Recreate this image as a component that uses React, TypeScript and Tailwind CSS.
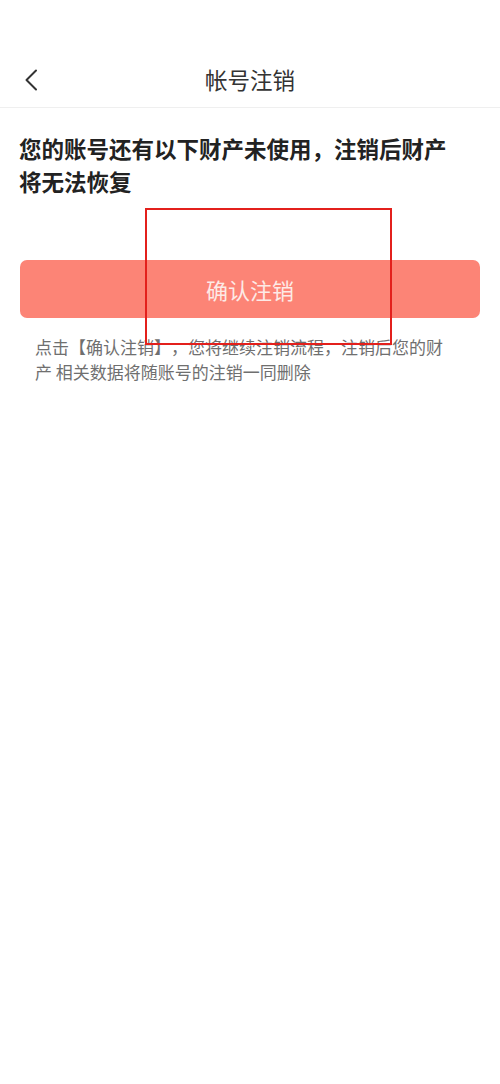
import React from 'react';

const font = { fontFamily: '"Noto Sans CJK SC", "Noto Sans", sans-serif' };

const BackIcon = () => (
  <svg viewBox="0 0 14 22" className="w-[14px] h-[22px]" fill="none">
    <path d="M12 1.5 2.5 11 12 20.5" stroke="#333333" strokeWidth="2" strokeLinecap="round" strokeLinejoin="round" />
  </svg>
);

export default function App() {
  return (
    <div className="relative w-[500px] min-h-[1084px] bg-white [text-spacing-trim:space-all]" style={font}>
      {/* status bar space + nav */}
      <div className="h-[52px]" />
      <div className="relative flex items-center justify-center h-[56px] border-b border-[#efefef]">
        <button className="absolute left-[24px] top-[17px]">
          <BackIcon />
        </button>
        <div className="text-[22.5px] text-[#333333] leading-none">帐号注销</div>
      </div>

      <div className="pt-[24px] pl-[19px] pr-[40px]">
        <div className="text-[22.5px] font-bold text-[#222222] leading-[33px]">
          您的账号还有以下财产未使用，注销后财产将无法恢复
        </div>
      </div>

      <div className="mt-[62px] px-[20px]">
        <button className="w-full h-[58px] rounded-[7px] bg-[#fc8476] text-[#fdeae6] text-[22px] flex items-center justify-center">
          确认注销
        </button>
      </div>

      <div className="mt-[16px] ml-[35px] mr-[45px] text-[17px] text-[#6f6f6f] leading-[25px]">
        点击【确认注销】，您将继续注销流程，注销后您的财产 相关数据将随账号的注销一同删除
      </div>

      {/* annotation frame */}
      <div className="absolute left-[145px] top-[208px] w-[247px] h-[137px] border-[2.5px] border-[#e3201c] pointer-events-none" />
    </div>
  );
}
